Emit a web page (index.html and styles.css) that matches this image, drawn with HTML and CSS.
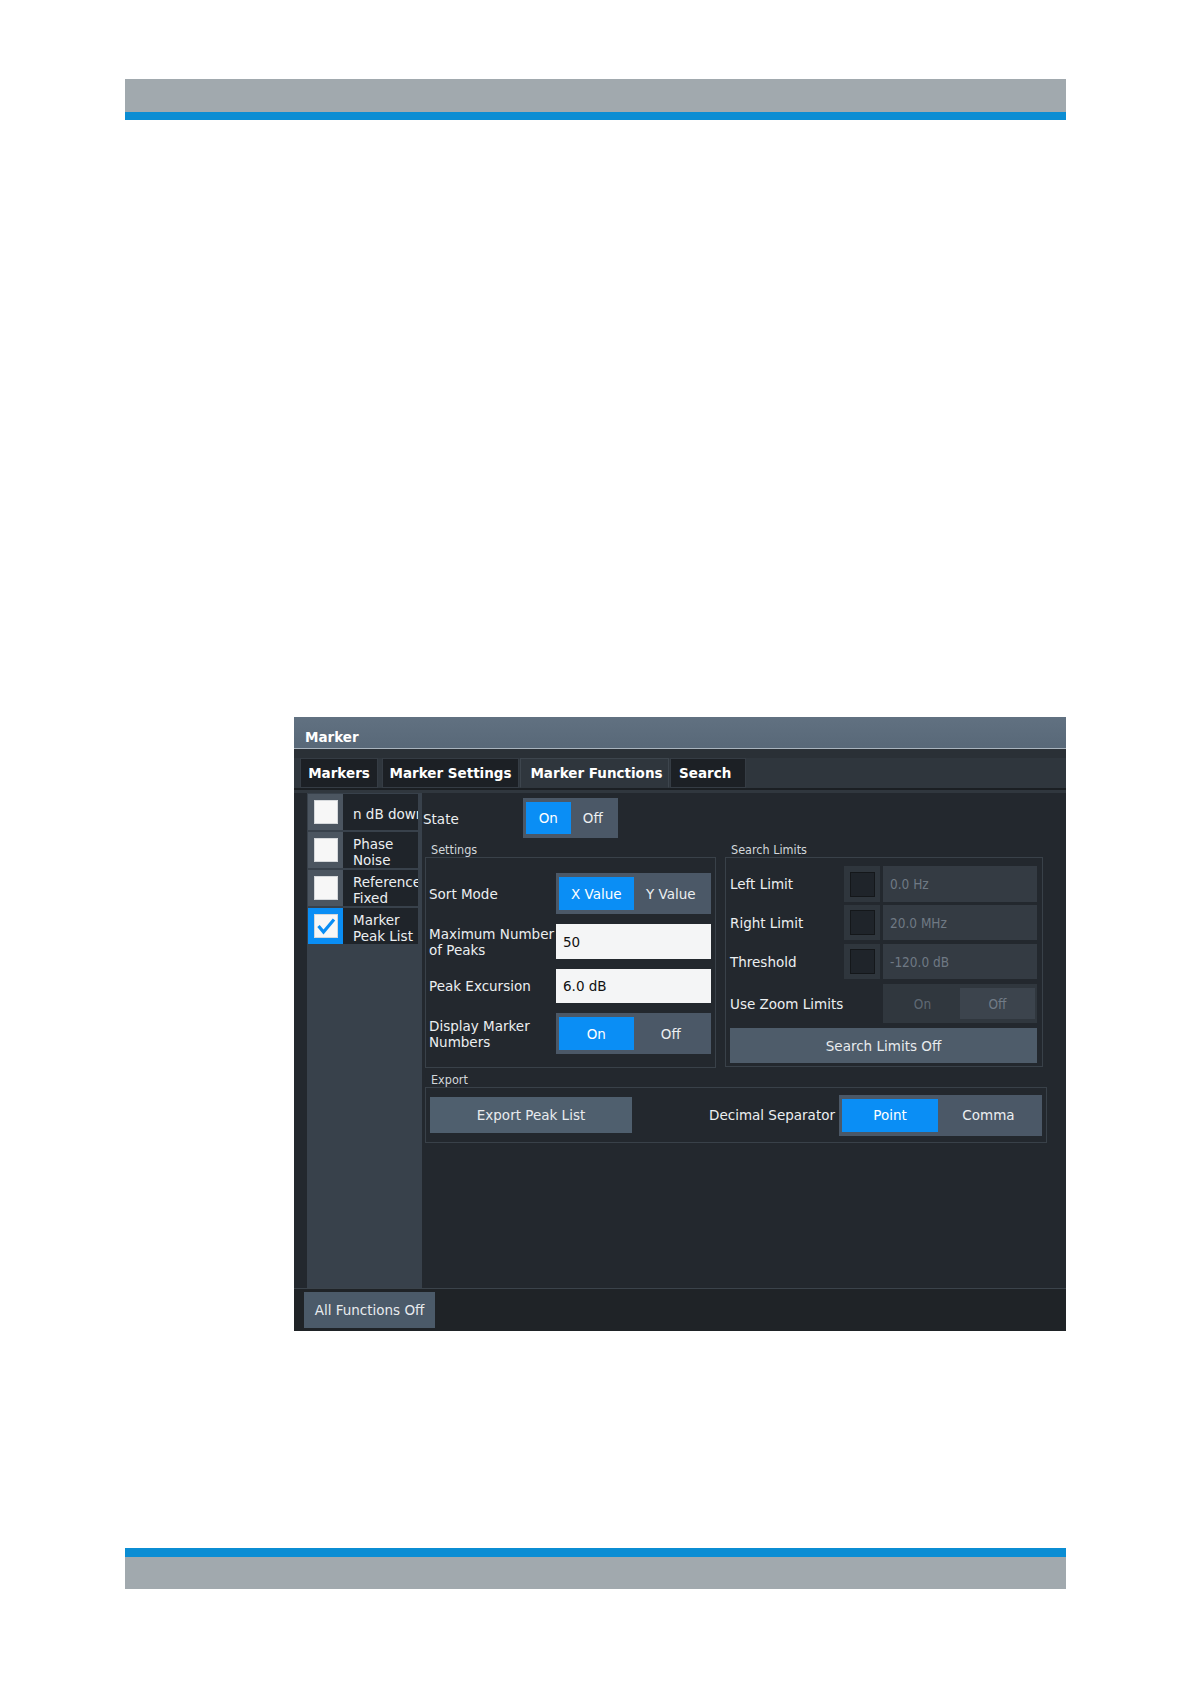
FILE: index.html
```html
<!DOCTYPE html>
<html lang="en">
<head>
<meta charset="utf-8">
<title>Marker</title>
<link rel="stylesheet" href="styles.css">
</head>
<body>
<div class="page">
  <div class="topbar"></div>

  <div class="dialog">
    <div class="titlebar">Marker</div>
    <div class="strip"></div>
    <div class="tabbar">
      <div class="tab t1">Markers</div>
      <div class="tab t2">Marker Settings</div>
      <div class="tab t3 active">Marker Functions</div>
      <div class="tab t4">Search</div>
    </div>
    <div class="tabline"></div>

    <div class="body">
      <div class="side">
        <div class="item">
          <div class="cb-cell"><span class="cb"></span></div>
          <div class="item-text">n dB down</div>
        </div>
        <div class="item">
          <div class="cb-cell"><span class="cb"></span></div>
          <div class="item-text">Phase<br>Noise</div>
        </div>
        <div class="item">
          <div class="cb-cell"><span class="cb"></span></div>
          <div class="item-text">Reference<br>Fixed</div>
        </div>
        <div class="item checked">
          <div class="cb-cell"><span class="cb"><svg width="24" height="24" viewBox="0 0 24 24"><polyline points="4.5,12 9.5,18 20,5.5" fill="none" stroke="#0a8ef5" stroke-width="3.2" stroke-linejoin="miter"/></svg></span></div>
          <div class="item-text">Marker<br>Peak List</div>
        </div>
      </div>

      <div class="content">
        <div class="state-row">
          <div class="state-label">State</div>
          <div class="toggle state-toggle">
            <div class="seg on">On</div>
            <div class="seg">Off</div>
          </div>
        </div>

        <div class="groups">
          <div class="group">
            <div class="glabel">Settings</div>
            <div class="gbox settings-box">
              <div class="srow r41">
                <div class="lbl">Sort Mode</div>
                <div class="toggle big">
                  <div class="seg on">X Value</div>
                  <div class="seg">Y Value</div>
                </div>
              </div>
              <div class="srow r35">
                <div class="lbl">Maximum Number<br>of Peaks</div>
                <div class="input">50</div>
              </div>
              <div class="srow r34">
                <div class="lbl">Peak Excursion</div>
                <div class="input">6.0 dB</div>
              </div>
              <div class="srow r41">
                <div class="lbl">Display Marker<br>Numbers</div>
                <div class="toggle big">
                  <div class="seg on">On</div>
                  <div class="seg">Off</div>
                </div>
              </div>
            </div>
          </div>

          <div class="group">
            <div class="glabel">Search Limits</div>
            <div class="gbox search-box">
              <div class="lrow h36">
                <div class="llbl">Left Limit</div>
                <div class="dcb-cell"><span class="dcb"></span></div>
                <div class="dfield">0.0 Hz</div>
              </div>
              <div class="lrow h35 g3">
                <div class="llbl">Right Limit</div>
                <div class="dcb-cell"><span class="dcb"></span></div>
                <div class="dfield">20.0 MHz</div>
              </div>
              <div class="lrow h35 g4">
                <div class="llbl">Threshold</div>
                <div class="dcb-cell"><span class="dcb"></span></div>
                <div class="dfield">-120.0 dB</div>
              </div>
              <div class="lrow h39 g5">
                <div class="llbl wide">Use Zoom Limits</div>
                <div class="toggle dis">
                  <div class="seg">On</div>
                  <div class="seg sel">Off</div>
                </div>
              </div>
              <div class="btn limits-btn">Search Limits Off</div>
            </div>
          </div>
        </div>

        <div class="glabel export-label">Export</div>
        <div class="gbox export-box">
          <div class="btn export-btn">Export Peak List</div>
          <div class="dec-label">Decimal Separator</div>
          <div class="toggle dec">
            <div class="seg on">Point</div>
            <div class="seg">Comma</div>
          </div>
        </div>
      </div>
    </div>

    <div class="footer">
      <div class="btn footer-btn">All Functions Off</div>
    </div>
  </div>

  <div class="bottombar"></div>
</div>
</body>
</html>
```

FILE: styles.css
```css
* { box-sizing: border-box; }

html, body {
  margin: 0;
  padding: 0;
  background: #ffffff;
}

body {
  font-family: "DejaVu Sans", "Liberation Sans", sans-serif;
  font-size: 13.5px;
  color: #eceff1;
}

.page {
  padding: 79px 0 0 125px;
  width: 1066px;
}

.topbar {
  width: 941px;
  height: 41px;
  background: #a1a9ae;
  border-bottom: 8px solid #0b8dd3;
}

.bottombar {
  width: 941px;
  height: 41px;
  margin-top: 217px;
  background: #a1a9ae;
  border-top: 9px solid #0b8dd3;
}

/* dialog */
.dialog {
  margin: 597px 0 0 169px;
  width: 772px;
  height: 614px;
  background: #23282e;
  display: flex;
  flex-direction: column;
}

.titlebar {
  height: 32px;
  line-height: 16px;
  padding: 12px 0 0 11px;
  font-weight: bold;
  font-size: 13.5px;
  color: #ffffff;
  background: linear-gradient(#617181, #586878);
  border-bottom: 1px solid #a9b4be;
  overflow: hidden;
}

.strip {
  height: 9px;
  background: #2a3036;
}

.tabbar {
  height: 30px;
  background: #2f363d;
  display: flex;
  padding-left: 6px;
}

.tab {
  height: 30px;
  line-height: 29px;
  font-weight: bold;
  font-size: 13.5px;
  color: #ffffff;
  background: #1c2025;
  border: 1px solid #353c44;
  text-align: center;
  white-space: nowrap;
}

.tab.t1 { width: 78px; }
.tab.t2 { width: 137px; margin-left: 4px; }
.tab.t3 { width: 149px; margin-left: 1px; padding-left: 4px; }
.tab.t4 { width: 76px; margin-left: 1px; text-align: left; padding-left: 8px; }

.tab.active {
  background: #2f363d;
  border-color: #3d454d;
  border-bottom-color: #2f363d;
}

.tabline {
  height: 5px;
  background: #1b1f23;
  border-bottom: 3px solid #30373e;
}

/* body */
.body {
  height: 495px;
  display: flex;
}

.side {
  margin-left: 13px;
  width: 115px;
  background: #38414b;
  padding: 1px 4px 0 1px;
  display: flex;
  flex-direction: column;
  gap: 2px;
}

.item {
  height: 36px;
  display: flex;
}

.cb-cell {
  width: 35px;
  background: #4b5560;
  display: flex;
  align-items: center;
  justify-content: center;
}

.item.checked .cb-cell {
  background: #0a8ef5;
}

.cb {
  width: 24px;
  height: 24px;
  background: #f7f7f7;
  border: 1px solid #d5d8db;
  display: block;
  position: relative;
}

.cb svg {
  position: absolute;
  left: -1px;
  top: -1px;
}

.item-text {
  flex: 1;
  background: #1f242a;
  padding: 3px 0 0 10px;
  display: flex;
  align-items: center;
  line-height: 16px;
  white-space: nowrap;
  overflow: hidden;
  color: #eceff1;
}

.content {
  flex: 1;
  padding-left: 1px;
}

.state-row {
  margin-top: 5px;
  height: 40px;
  display: flex;
  align-items: center;
}

.state-label {
  width: 100px;
  padding-top: 2px;
}

.toggle {
  display: flex;
  padding: 4px 3px;
  background: #4b5867;
}

.toggle .seg {
  flex: 1;
  display: flex;
  align-items: center;
  justify-content: center;
  color: #eceff1;
  white-space: nowrap;
}

.toggle .seg.on {
  background: #0a8ef5;
  color: #ffffff;
}

.state-toggle {
  width: 95px;
  height: 40px;
}

.groups {
  margin: 4px 0 0 2px;
  display: flex;
  gap: 9px;
  align-items: flex-start;
}

.glabel {
  height: 15px;
  line-height: 15px;
  padding-left: 6px;
  font-family: "DejaVu Sans Condensed", "DejaVu Sans", sans-serif;
  font-weight: 300;
  font-size: 12.5px;
  color: #d2d7db;
}

.gbox {
  border: 1px solid #394149;
}

.settings-box {
  width: 291px;
  padding: 15px 4px 13px 3px;
  display: flex;
  flex-direction: column;
  gap: 10px;
}

.srow {
  display: flex;
  align-items: center;
}

.srow.r41 { height: 41px; }
.srow.r35 { height: 35px; }
.srow.r34 { height: 34px; }

.lbl {
  width: 127px;
  line-height: 16px;
  white-space: nowrap;
}

.srow .toggle.big,
.srow .input {
  width: 155px;
  height: 100%;
}

.input {
  background: #f4f5f6;
  color: #111111;
  padding-left: 7px;
  display: flex;
  align-items: center;
}

.search-box {
  width: 318px;
  padding: 8px 5px 3px 4px;
}

.lrow {
  display: flex;
  align-items: center;
}

.lrow.h36 { height: 36px; }
.lrow.h35 { height: 35px; }
.lrow.h39 { height: 39px; }
.lrow.g3 { margin-top: 3px; }
.lrow.g4 { margin-top: 4px; }
.lrow.g5 { margin-top: 5px; }

.llbl {
  width: 114px;
  white-space: nowrap;
}

.llbl.wide {
  width: 153px;
}

.dcb-cell {
  width: 36px;
  height: 100%;
  background: #2f363d;
  display: flex;
  align-items: center;
  justify-content: center;
  margin-right: 3px;
}

.dcb {
  width: 25px;
  height: 25px;
  background: #1f242a;
  border: 1px solid #14171a;
  display: block;
}

.dfield {
  width: 154px;
  height: 100%;
  background: #343b43;
  color: #6f7984;
  padding-left: 7px;
  display: flex;
  align-items: center;
  font-family: "DejaVu Sans Condensed", "DejaVu Sans", sans-serif;
  font-weight: 300;
}

.toggle.dis {
  width: 154px;
  height: 39px;
  background: #30373e;
  padding: 4px 2px;
}

.toggle.dis .seg {
  color: #5f6974;
  font-family: "DejaVu Sans Condensed", "DejaVu Sans", sans-serif;
  font-weight: 300;
}

.toggle.dis .seg.sel {
  background: #3c444d;
  color: #717b86;
}

.btn {
  display: flex;
  align-items: center;
  justify-content: center;
  color: #e8ebee;
  white-space: nowrap;
}

.limits-btn {
  margin-top: 5px;
  width: 307px;
  height: 35px;
  background: #4e5c6a;
}

.export-label {
  margin: 4px 0 0 2px;
}

.export-box {
  margin-left: 2px;
  width: 622px;
  height: 56px;
  padding: 0 4px;
  display: flex;
  align-items: center;
}

.export-btn {
  width: 202px;
  height: 36px;
  background: #4f5f6e;
}

.dec-label {
  margin-left: auto;
  margin-right: 4px;
  white-space: nowrap;
}

.toggle.dec {
  width: 203px;
  height: 41px;
  padding: 4px 3px;
}

.toggle.dec .seg.on {
  flex: 0 0 96px;
}

.footer {
  height: 43px;
  background: #1f2327;
  border-top: 1px solid #3b434b;
  padding: 3px 0 0 10px;
}

.footer-btn {
  width: 131px;
  height: 36px;
  background: #4b5a69;
}
```
